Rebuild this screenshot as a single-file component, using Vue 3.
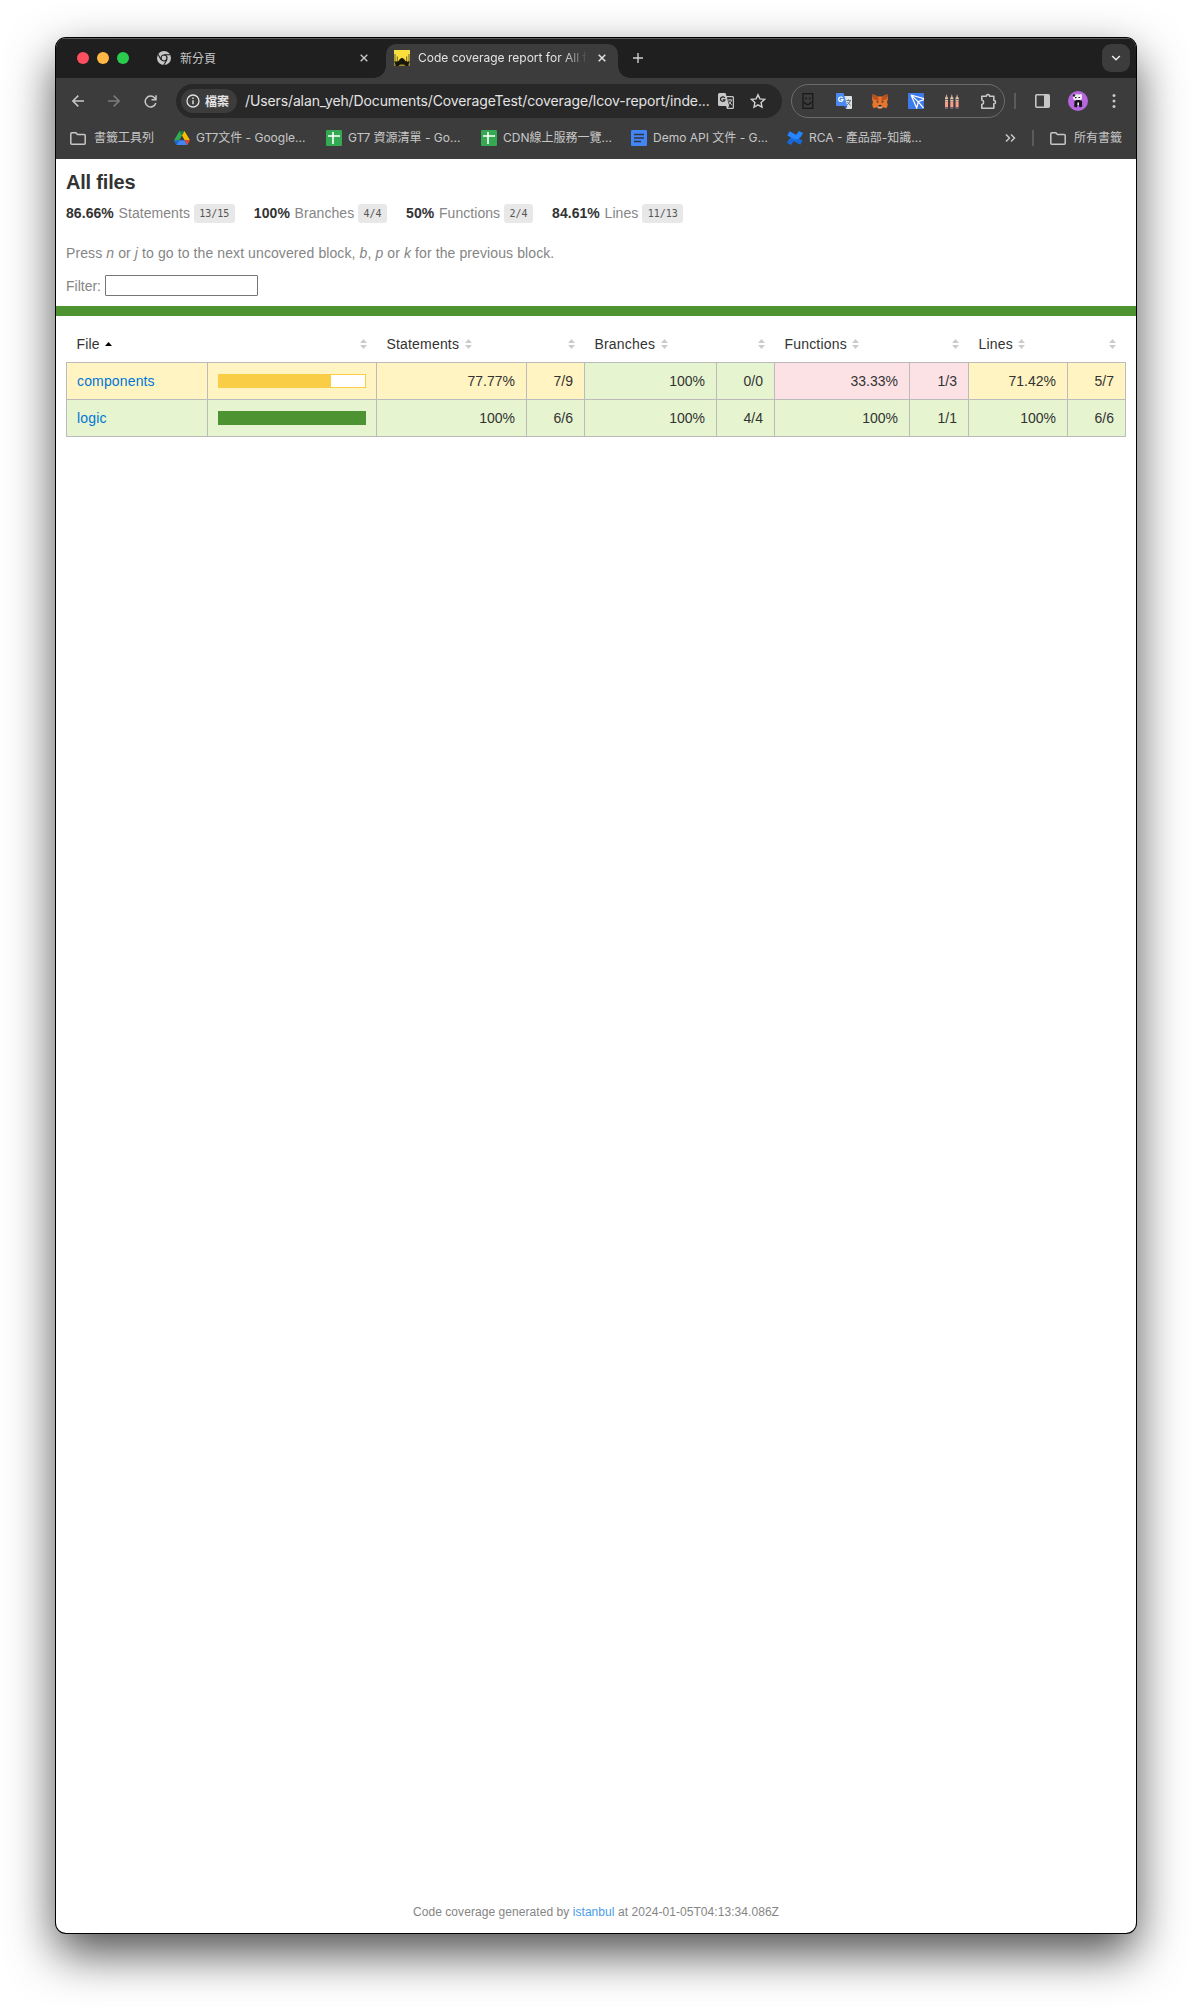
<script setup>
const bookmarks = [
  { icon: 'folder', label: '書籤工具列', width: 104, gap: 8 },
  { icon: 'drive', label: 'GT7文件 - Google...', width: 152, gap: 6 },
  { icon: 'sheet', label: 'GT7 資源清單 - Go...', width: 155, gap: 6 },
  { icon: 'sheet', label: 'CDN線上服務一覽...', width: 150, gap: 6 },
  { icon: 'doc', label: 'Demo API 文件 - G...', width: 156, gap: 6 },
  { icon: 'confluence', label: 'RCA - 產品部-知識...', width: 150, gap: 6 },
]
const metrics = [
  { pct: '86.66%', name: 'Statements', frac: '13/15' },
  { pct: '100%', name: 'Branches', frac: '4/4' },
  { pct: '50%', name: 'Functions', frac: '2/4' },
  { pct: '84.61%', name: 'Lines', frac: '11/13' },
]
const columns = [
  { label: 'File', width: 141, sorted: true },
  { label: '', width: 169 },
  { label: 'Statements', width: 150 },
  { label: '', width: 58 },
  { label: 'Branches', width: 132 },
  { label: '', width: 58 },
  { label: 'Functions', width: 135 },
  { label: '', width: 59 },
  { label: 'Lines', width: 99 },
  { label: '', width: 58 },
]
const rows = [
  {
    name: 'components', level: 'medium', fill: 77,
    cells: [['77.77%', 'medium'], ['7/9', 'medium'], ['100%', 'high'], ['0/0', 'high'], ['33.33%', 'low'], ['1/3', 'low'], ['71.42%', 'medium'], ['5/7', 'medium']],
  },
  {
    name: 'logic', level: 'high', fill: 100,
    cells: [['100%', 'high'], ['6/6', 'high'], ['100%', 'high'], ['4/4', 'high'], ['100%', 'high'], ['1/1', 'high'], ['100%', 'high'], ['6/6', 'high']],
  },
]
</script>

<template>
  <div class="desktop">
    <div class="window">
      <header class="chrome">
        <div class="tabs">
          <div class="lights"><i class="red"></i><i class="amber"></i><i class="green"></i></div>
          <div class="tab idle">
            <svg class="chrome-logo" width="14" height="14" viewBox="0 0 14 14">
              <circle cx="7" cy="7" r="7" fill="#c7c7c7" />
              <circle cx="7" cy="7" r="3" fill="#c7c7c7" stroke="#1f1f1f" stroke-width="1.2" />
              <path d="M7 3.7h6.2M4.1 8.7L1 3.3M9.9 8.7L6.8 14" stroke="#1f1f1f" stroke-width="1.1" />
            </svg>
            <span class="tab-title">新分頁</span>
            <svg class="close" width="8" height="8" viewBox="0 0 8 8"><path d="M.7.7l6.6 6.6M7.3.7L.7 7.3" stroke="#c7c7c7" stroke-width="1.4" /></svg>
          </div>
          <div class="tab active">
            <svg width="16" height="16" viewBox="0 0 16 16">
              <rect width="16" height="16" fill="#f9df3d" />
              <path d="M0 11h16v5H0z" fill="#a08c26" />
              <path d="M1 4v9M15 4v9M3.3 6.5V13M12.7 6.5V13" stroke="#5b5120" stroke-width=".9" />
              <path d="M1.5 16v-1.500L.5 11.500 3 12l2-1.500C5.500 9 6.800 8.500 8 7.800c1.200.7 2.500 1.200 3 2.700l2 1.500 2.500-.5-1 3V16h-3l-1.500-1.500H6L4.500 16z" fill="#18170c" />
            </svg>
            <span class="tab-title faded">Code coverage report for All f</span>
            <svg class="close" width="8" height="8" viewBox="0 0 8 8"><path d="M.7.7l6.6 6.6M7.3.7L.7 7.3" stroke="#e3e3e3" stroke-width="1.5" /></svg>
          </div>
          <svg class="plus" width="10" height="10" viewBox="0 0 10 10"><path d="M5 0v10M0 5h10" stroke="#d0d0d0" stroke-width="1.4" /></svg>
          <div class="search-tabs">
            <svg width="10" height="6" viewBox="0 0 10 6"><path d="M1.2 1L5 4.700 8.800 1" fill="none" stroke="#e8e8e8" stroke-width="1.6" /></svg>
          </div>
        </div>

        <div class="toolbar">
          <div class="slot"><svg width="12" height="12" viewBox="0 0 12 12" fill="none" stroke="#c7c7c7" stroke-width="1.5"><path d="M12 6H1M6.3.6L.9 6l5.400 5.400" /></svg></div>
          <div class="slot"><svg width="12" height="12" viewBox="0 0 12 12" fill="none" stroke="#7b7b7b" stroke-width="1.5"><path d="M0 6h11M5.700.6L11.100 6l-5.400 5.400" /></svg></div>
          <div class="slot"><svg width="13" height="13" viewBox="0 0 13 13" fill="none" stroke="#c7c7c7" stroke-width="1.5"><path d="M11.800 8A5.400 5.400 0 1 1 10.700 3l1.300 1.500M12 .3v4.500H7.500" /></svg></div>
          <div class="omnibox">
            <div class="chip">
              <svg width="14" height="14" viewBox="0 0 14 14"><circle cx="7" cy="7" r="6" fill="none" stroke="#e3e3e3" stroke-width="1.3" /><path d="M7 6.200v4M7 3.500v1.500" stroke="#e3e3e3" stroke-width="1.4" /></svg>
              <span>檔案</span>
            </div>
            <span class="url">/Users/alan_yeh/Documents/CoverageTest/coverage/lcov-report/inde...</span>
            <svg class="translate" width="16" height="16" viewBox="0 0 16 16">
              <path d="M1.500 0h6l1 3h6A1.500 1.500 0 0 1 16 4.500v10a1.500 1.500 0 0 1-1.500 1.500H9l-1-3H1.500A1.500 1.500 0 0 1 0 11.500v-10A1.500 1.500 0 0 1 1.500 0z" fill="#c7c7c7" />
              <path d="M8.900 4.200h5.300q.6 0 .6.600v9.400q0 .6-.6.600H9.800l1.400-1.800z" fill="#282828" />
              <path d="M6.800 5A2.300 2.300 0 1 0 7 6.800H4.800" fill="none" stroke="#282828" stroke-width="1.2" />
              <path d="M9.800 7h4.500M12 6v1M13.500 7.200c-.5 2-1.500 3.300-3 4.300M10.700 8.300l3.300 4" fill="none" stroke="#c7c7c7" stroke-width="1" />
            </svg>
            <svg class="star" width="16" height="16" viewBox="0 0 16 16"><path d="M8 1.700l1.900 4.200 4.600.5-3.400 3.100.9 4.600L8 11.800l-4 2.300.9-4.600L1.500 6.400l4.600-.5z" fill="none" stroke="#d0d0d0" stroke-width="1.4" /></svg>
          </div>
          <div class="extensions">
            <div class="ext"><svg width="12" height="16" viewBox="0 0 12 16" fill="none" stroke="#171717" stroke-width="1.2"><rect x="1" y=".7" width="9.8" height="14.6" /><path d="M2.500 9.500c1.500 2.800 5 2.800 6.500 0M2 9.800l1-.8M8.300 9l1.200.8" stroke-width="1.5" /><path d="M3.200 5.500h1.600M7 5.500h1.600" stroke-width="1.5" /></svg></div>
            <div class="ext"><svg width="16" height="16" viewBox="0 0 16 16"><path d="M7 3h8a1 1 0 0 1 1 1v11a1 1 0 0 1-1 1H10z" fill="#dfe2e5" /><path d="M1 0h6.500l3.800 13H1a1 1 0 0 1-1-1V1a1 1 0 0 1 1-1z" fill="#4b8af0" /><path d="M8 13h3.300L10 16z" fill="#2f5fc9" /><path d="M6.700 5A2.200 2.200 0 1 0 7 6.700H4.800" fill="none" stroke="#fff" stroke-width="1.2" /><path d="M10.300 7.500h4.700M12.500 6.500v1M14.200 7.500c-.3 2-1.500 3-3 4.300M11.500 9l3 3.500" fill="none" stroke="#61757b" /></svg></div>
            <div class="ext"><svg width="16" height="15" viewBox="0 0 16 15"><path d="M.8 0l5 2.500h4.400l5-2.500.8 5-1 3 .8 3-1.300 3.300-3.500-1-1.500 1.500H6.500L5 13.300l-3.500 1L.2 11 1 8 0 5z" fill="#e8752b" /><path d="M.8 0l5 2.500L7 7 1 5zM15.200 0l-5 2.500L9 7l6-2z" fill="#b85220" /><path d="M4 7l2.500.5-.5 1.700zM12 7l-2.500.5.5 1.700z" fill="#2b3945" /><path d="M6.300 11h3.400l.5 2.800H5.800z" fill="#c9bcb1" /><path d="M6.500 11h3l.2 1.500H6.300z" fill="#252423" /></svg></div>
            <div class="ext"><svg width="16" height="16" viewBox="0 0 16 16"><rect width="16" height="16" rx="1" fill="#3d7bea" /><path d="M3 2l13 3.700M3 2l5.700 13 1.600-6.200L16 6.500M3 2l7.300 6.800L15.500 15" fill="none" stroke="#fff" stroke-width="1.2" /></svg></div>
            <div class="ext"><svg width="14" height="15" viewBox="0 0 14 15"><g v-for="x in [0, 5.3, 10.6]" :key="x"><path :d="`M${x} 5L${x + 1.5} 0l1.500 5z`" fill="#c6a598" /><rect :x="x" y="3.5" width="3" height="4" fill="#e4c7a5" /><rect :x="x" y="5" width="3" height="1" fill="#6b5968" /><rect :x="x" y="7.5" width="3" height="6" fill="#fa9f87" /><rect :x="x" y="13" width="3" height="2" fill="#77636b" /></g></svg></div>
            <div class="ext"><svg width="17" height="17" viewBox="0 0 17 17"><path d="M1.800 3.200h4.500c0-2.300 3.300-2.300 3.300 0h4.200v4.300c2.300 0 2.300 3.300 0 3.300v4.400h-12v-3.600c2.400-.4 2.400-4.200 0-4.600z" fill="none" stroke="#c7c7c7" stroke-width="1.6" stroke-linejoin="round" /></svg></div>
          </div>
          <div class="divider"></div>
          <div class="slot"><svg width="15" height="14" viewBox="0 0 15 14"><rect x=".8" y=".8" width="13.4" height="12.4" rx="1" fill="none" stroke="#c7c7c7" stroke-width="1.6" /><path d="M9 1h5v12H9z" fill="#c7c7c7" /></svg></div>
          <div class="slot">
            <svg width="20" height="20" viewBox="0 0 20 20"><circle cx="10" cy="10" r="10" fill="#b667de" /><ellipse cx="9.5" cy="6.5" rx="4.5" ry="3.3" fill="#f1edf2" /><circle cx="6" cy="4.5" r="1.2" fill="#28222b" /><circle cx="12.7" cy="4.2" r="1.2" fill="#eee" /><path d="M7 6.700h1.500M10.500 6.500H12" stroke="#28222b" stroke-width="1.2" /><path d="M6.500 10l2-1h3l2.500 1 .2 5.500-2.500 1-1-2.500H9.500l-.8 2.500-2.500-.8z" fill="#17121a" /><path d="M9.400 11.500h1.600v2.500H9.400z" fill="#eee" /></svg>
          </div>
          <div class="slot"><svg width="4" height="14" viewBox="0 0 4 14" fill="#c7c7c7"><circle cx="2" cy="1.6" r="1.5" /><circle cx="2" cy="7" r="1.5" /><circle cx="2" cy="12.4" r="1.5" /></svg></div>
        </div>

        <div class="bookmarks">
          <div v-for="b in bookmarks" :key="b.label" class="bookmark" :style="{ width: b.width + 'px', gap: b.gap + 'px' }">
            <svg v-if="b.icon === 'folder'" width="16" height="13" viewBox="0 0 16 13"><path d="M1.800.8h4l1.700 1.800h6.700q1 0 1 1v7.600q0 1-1 1H1.800q-1 0-1-1V1.800q0-1 1-1z" fill="none" stroke="#c7c7c7" stroke-width="1.5" /></svg>
            <svg v-else-if="b.icon === 'drive'" width="16" height="14" viewBox="0 0 16 14"><path d="M5.500 0h5L8 4.600z" fill="#188038" /><path d="M5.500 0L0 9.300 2.600 14 8 4.600z" fill="#34a853" /><path d="M10.500 0L8 4.600l2.700 4.700H16z" fill="#fbbc04" /><path d="M5.300 9.300h5.400l2.700 4.700H2.600z" fill="#4285f4" /><path d="M0 9.300h5.300L2.600 14z" fill="#1967d2" /><path d="M10.700 9.300H16L13.400 14z" fill="#ea4335" /></svg>
            <svg v-else-if="b.icon === 'sheet'" width="16" height="16" viewBox="0 0 16 16"><rect width="16" height="16" rx="1.2" fill="#34a853" /><path d="M2 6h12M7 2v12" stroke="#fff" stroke-width="1.6" /></svg>
            <svg v-else-if="b.icon === 'doc'" width="16" height="16" viewBox="0 0 16 16"><rect width="16" height="16" rx="1.2" fill="#4285f4" /><path d="M3 4.500h10M3 8h10M3 11.500h7" stroke="#30363f" stroke-width="1.5" /></svg>
            <svg v-else width="16" height="16" viewBox="0 0 16 16" fill="none" stroke-width="4.8"><path d="M2 14C4.500 8.800 6.300 8.200 9 9.600l5.500 3" stroke="#1868db" /><path d="M14 2C11.500 7.200 9.700 7.800 7 6.400l-5.500-3" stroke="#2684ff" /></svg>
            <span>{{ b.label }}</span>
          </div>
          <svg class="more" width="11" height="8" viewBox="0 0 11 8"><path d="M1 .5L4.500 4 1 7.500M6 .5L9.500 4 6 7.500" fill="none" stroke="#c7c7c7" stroke-width="1.5" /></svg>
          <div class="bm-divider"></div>
          <div class="bookmark all">
            <svg width="16" height="13" viewBox="0 0 16 13"><path d="M1.800.8h4l1.700 1.800h6.700q1 0 1 1v7.600q0 1-1 1H1.800q-1 0-1-1V1.800q0-1 1-1z" fill="none" stroke="#c7c7c7" stroke-width="1.5" /></svg>
            <span>所有書籤</span>
          </div>
        </div>
      </header>

      <main class="report">
        <section class="summary">
          <h1>All files</h1>
          <div class="metrics">
            <div v-for="m in metrics" :key="m.name" class="metric">
              <strong>{{ m.pct }}</strong>
              <span class="quiet">{{ m.name }}</span>
              <span class="fraction">{{ m.frac }}</span>
            </div>
          </div>
          <p class="quiet help">Press <em>n</em> or <em>j</em> to go to the next uncovered block, <em>b</em>, <em>p</em> or <em>k</em> for the previous block.</p>
          <label class="quiet filter">Filter: <input type="search" /></label>
        </section>
        <div class="status-line"></div>
        <table>
          <colgroup><col v-for="(c, i) in columns" :key="i" :style="{ width: c.width + 'px' }" /></colgroup>
          <thead>
            <tr>
              <th v-for="(c, i) in columns" :key="i" :class="{ bare: !c.label }">
                <div class="head">
                  <span v-if="c.label">{{ c.label }}</span>
                  <svg width="7" height="10" viewBox="0 0 7 10">
                    <path v-if="c.sorted" d="M0 7l3.500-4L7 7z" fill="#000" />
                    <path v-else d="M0 4l3.500-4L7 4zM0 6l3.500 4L7 6z" fill="#ccc" />
                  </svg>
                </div>
              </th>
            </tr>
          </thead>
          <tbody>
            <tr v-for="r in rows" :key="r.name">
              <td class="name" :class="r.level"><a>{{ r.name }}</a></td>
              <td class="pic" :class="r.level"><div class="chart"><div class="fill" :style="{ width: r.fill + '%' }"></div></div></td>
              <td v-for="(c, i) in r.cells" :key="i" class="num" :class="c[1]">{{ c[0] }}</td>
            </tr>
          </tbody>
        </table>
        <footer>Code coverage generated by <a>istanbul</a> at 2024-01-05T04:13:34.086Z</footer>
      </main>
    </div>
  </div>
</template>

<style>
body { margin: 0; background: #fff; }
</style>

<style scoped>
* { box-sizing: border-box; }
svg { display: block; flex: none; }
.desktop { width: 1192px; height: 2007px; padding: 38px 56px 74px; overflow: hidden; background: #fff; }
.window {
  display: flex; flex-direction: column; width: 1080px; height: 1895px;
  border-radius: 10px; background: #fff;
  box-shadow: 0 0 0 1px #000, 0 20px 48px rgba(0, 0, 0, .7);
}
.chrome {
  height: 121px; flex: none; border-radius: 10px 10px 0 0; background: #3c3c3c; color: #c7c7c7;
  font-family: Inter, "Noto Sans CJK TC", sans-serif; font-size: 12px; overflow: hidden;
}
.tabs { display: flex; align-items: center; height: 40px; background: #1f1f1f; box-shadow: inset 0 1px #5c5c5c; }
.lights { display: flex; gap: 8px; padding-left: 21px; }
.lights i { width: 12px; height: 12px; border-radius: 50%; }
.red { background: #ff4f5e; }
.amber { background: #ffb846; }
.green { background: #2bcb4d; }
.tab { display: flex; align-items: center; white-space: nowrap; }
.idle { width: 257px; padding-left: 28px; }
.idle .tab-title { margin-left: 9px; padding-bottom: 2px; }
.idle .close { margin: 0 18px 0 auto; }
.active {
  position: relative; width: 232px; height: 34px; align-self: flex-end; padding: 0 12px 6px 8px;
  border-radius: 10px 10px 0 0; background: #3c3c3c; color: #e3e3e3;
}
.active::before, .active::after { content: ""; position: absolute; bottom: 0; width: 12px; height: 12px; }
.active::before { left: -12px; background: radial-gradient(circle at 0 0, transparent 11.5px, #3c3c3c 12px); }
.active::after { right: -12px; background: radial-gradient(circle at 100% 0, transparent 11.5px, #3c3c3c 12px); }
.faded {
  width: 168px; margin-left: 8px; padding-bottom: 1px; overflow: hidden;
  mask-image: linear-gradient(90deg, #000 145px, transparent 170px);
}
.active .close { margin-left: auto; }
.plus { margin-left: 15px; }
.search-tabs { display: flex; align-items: center; justify-content: center; width: 28px; height: 28px; margin: 0 6px 0 auto; border-radius: 9px; background: #3c3c3c; }
.toolbar { display: flex; align-items: center; height: 46px; padding-left: 4px; }
.slot { display: flex; align-items: center; justify-content: center; width: 36px; height: 34px; }
.omnibox { display: flex; align-items: center; width: 606px; height: 34px; margin-left: 8px; padding: 0 16px 0 5px; border-radius: 17px; background: #282828; }
.chip { display: flex; align-items: center; gap: 5px; width: 56px; height: 24px; flex: none; padding-left: 5px; border-radius: 12px; background: #3c3c3c; color: #e3e3e3; font-weight: 700; }
.chip span { padding-bottom: 2px; white-space: nowrap; }
.url { width: 465px; margin-left: 8px; padding-bottom: 1px; color: #e3e3e3; font-size: 14px; white-space: nowrap; letter-spacing: -.12px; }
.translate { margin-left: 8px; }
.star { margin-left: 16px; }
.extensions { display: flex; align-items: center; gap: 4px; width: 214px; height: 34px; margin-left: 9px; border: 1px solid #6c6c6c; border-radius: 17px; }
.ext { display: flex; align-items: center; justify-content: center; width: 32px; flex: none; }
.divider { width: 2px; height: 16px; margin: 0 8px 0 9px; background: #5c5c5c; }
.bookmarks { display: flex; align-items: center; height: 28px; padding-left: 14px; }
.bookmark { display: flex; align-items: center; flex: none; white-space: nowrap; }
.bookmark span { padding-bottom: 3px; }
.more { margin-left: 68px; }
.bm-divider { width: 2px; height: 16px; margin-left: 16px; background: #5c5c5c; }
.all { gap: 8px; margin-left: 16px; }

.report { display: flex; flex-direction: column; flex: 1; color: #333; font: 14px/20px "Liberation Sans", Arial, sans-serif; }
.summary { height: 147px; padding: 12px 10px 0; }
h1 { margin: 0; font-size: 20px; line-height: 22px; letter-spacing: -.2px; }
.metrics { display: flex; gap: 19.2px; margin-top: 10px; height: 20px; white-space: nowrap; letter-spacing: .06px; }
.metric { display: flex; align-items: center; }
.metric .quiet { margin: 0 4px 0 4.7px; }
.quiet { color: #858585; }
.fraction { margin-top: 1px; padding: 4px 5.3px 3px; border-radius: 3px; background: #e8e8e8; color: #555; font: 10px/12px "DejaVu Sans Mono", monospace; letter-spacing: 0; }
.help { margin: 20px 0 0; letter-spacing: .1px; }
.filter { display: flex; align-items: center; gap: 4px; margin-top: 12px; }
.filter input { width: 153px; height: 21px; margin: 0; padding: 1px; border: 1px solid #767676; border-radius: 1px; background: #fff; appearance: none; }
.status-line { height: 10px; background: #4d9331; }
table { width: 1060px; margin: 9px 10px 0; border-collapse: collapse; table-layout: fixed; }
th { height: 37px; padding: 2px 9px 0 10px; font-weight: 400; }
.head { display: flex; align-items: center; gap: 5.5px; letter-spacing: .18px; }
th.bare { padding-right: 10px; }
.bare .head { justify-content: flex-end; }
td { height: 37px; padding: 0 11px 0 10px; border: 1px solid #bbb; }
td.pic { padding-right: 9px; }
.num { text-align: right; }
td.high { background: #e6f5d0; }
td.medium { background: #fff4c2; }
td.low { background: #fce1e5; }
.name a { color: #0074d9; letter-spacing: .15px; }
.chart { width: 148px; height: 14px; border: 1px solid #4d9331; background: #fff; }
.fill { height: 12px; background: #4d9331; }
.medium .chart { border-color: #f9cd45; }
.medium .fill { background: #f9cd45; }
footer { margin: auto 0 0; padding-bottom: 11px; color: #858585; font-size: 12px; text-align: center; letter-spacing: .06px; }
footer a { color: #4a9be8; }
</style>
